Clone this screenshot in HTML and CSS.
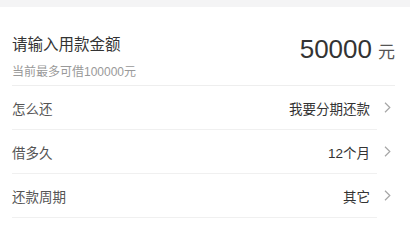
FILE: index.html
```html
<!DOCTYPE html>
<html lang="zh-CN">
<head>
<meta charset="utf-8">
<link rel="stylesheet" href="styles.css">
</head>
<body>
<div class="band"></div>
<div class="header">
  <div class="intro">
    <div class="title">请输入用款金额</div>
    <div class="hint">当前最多可借100000元</div>
  </div>
  <div class="amount"><span class="num">50000</span><span class="unit">元</span></div>
</div>
<div class="row">
  <div class="row-body"><span class="label">怎么还</span><span class="value">我要分期还款</span></div>
  <div class="arrow"><svg width="7" height="11" viewBox="0 0 7 11"><path d="M1 0.8 L5.8 5.5 L1 10.2" fill="none" stroke="#a6a6a6" stroke-width="1.2"/></svg></div>
</div>
<div class="row">
  <div class="row-body"><span class="label">借多久</span><span class="value">12个月</span></div>
  <div class="arrow"><svg width="7" height="11" viewBox="0 0 7 11"><path d="M1 0.8 L5.8 5.5 L1 10.2" fill="none" stroke="#a6a6a6" stroke-width="1.2"/></svg></div>
</div>
<div class="row">
  <div class="row-body"><span class="label">还款周期</span><span class="value">其它</span></div>
  <div class="arrow"><svg width="7" height="11" viewBox="0 0 7 11"><path d="M1 0.8 L5.8 5.5 L1 10.2" fill="none" stroke="#a6a6a6" stroke-width="1.2"/></svg></div>
</div>
</body>
</html>
```
FILE: styles.css
```css
html, body {
  margin: 0;
  padding: 0;
  background: #fff;
  font-family: "Liberation Sans", "Noto Sans CJK SC", sans-serif;
  color: #333;
}
.band {
  height: 7px;
  background: #f4f4f5;
}
.header {
  display: flex;
  justify-content: space-between;
  align-items: flex-start;
  margin: 0 15px 0 12px;
  padding: 28px 0 5px;
  border-bottom: 1px solid #eeeeee;
}
.title {
  font-size: 15.5px;
  line-height: 20px;
  color: #333;
}
.hint {
  margin-top: 9px;
  font-size: 12px;
  line-height: 16px;
  color: #999;
}
.amount {
  display: flex;
  align-items: baseline;
  margin-top: -1px;
}
.num {
  font-size: 26px;
  line-height: 30px;
  color: #333;
}
.unit {
  margin-left: 6px;
  font-size: 17px;
  color: #555;
}
.row {
  display: flex;
  margin-left: 12px;
}
.row-body {
  flex: 1;
  height: 43px;
  display: flex;
  align-items: center;
  justify-content: space-between;
  padding-right: 7px;
  border-bottom: 1px solid #f0f0f0;
  font-size: 13.5px;
}
.label {
  color: #555;
}
.value {
  color: #333;
}
.arrow {
  width: 33px;
  display: flex;
  align-items: center;
  padding-left: 7px;
  box-sizing: border-box;
  height: 43px;
}
.arrow svg {
  display: block;
}
```
